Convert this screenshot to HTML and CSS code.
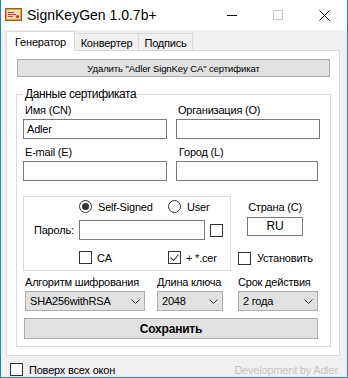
FILE: index.html
```html
<!DOCTYPE html>
<html>
<head>
  <meta charset="utf-8">
  <title>SignKeyGen 1.0.7b+</title>
  <link rel="stylesheet" href="styles.css">
</head>
<body>
  <div class="window">
    <div class="titlebar">
      <svg class="app-icon" width="17" height="13" viewBox="0 0 17 13">
        <rect x="0.5" y="0.5" width="16" height="12" fill="#f3dfb4" stroke="#a85a1c"/>
        <rect x="1.5" y="1.5" width="14" height="10" fill="none" stroke="#dba35a"/>
        <path d="M3 4.5h6M3 6.5h8M3 8.5h5" stroke="#c8452c"/>
        <circle cx="12.5" cy="8.5" r="1.6" fill="#d0302a"/>
      </svg>
      <span class="title">SignKeyGen 1.0.7b+</span>
      <div class="caption">
        <span class="cap-btn">
          <svg width="10" height="10" viewBox="0 0 10 10"><path d="M0 5.5h10" stroke="#000"/></svg>
        </span>
        <span class="cap-btn">
          <svg width="10" height="10" viewBox="0 0 10 10"><rect x="0.5" y="0.5" width="9" height="9" fill="none" stroke="#c6c6c6"/></svg>
        </span>
        <span class="cap-btn">
          <svg width="11" height="11" viewBox="0 0 11 11"><path d="M0.5 0.5l10 10M10.5 0.5l-10 10" stroke="#000"/></svg>
        </span>
      </div>
    </div>

    <div class="client">
      <div class="tabs">
        <div class="tab tab-active">Генератор</div>
        <div class="tab tab-convert">Конвертер</div>
        <div class="tab tab-sign">Подпись</div>
      </div>

      <div class="page">
        <button class="btn btn-remove">Удалить "Adler SignKey CA" сертификат</button>

        <fieldset class="group">
          <legend>Данные сертификата</legend>

          <div class="fields">
            <div class="field">
              <p class="label">Имя (CN)</p>
              <input type="text" class="textbox" value="Adler">
            </div>
            <div class="field">
              <p class="label">Организация (O)</p>
              <input type="text" class="textbox" value="">
            </div>
            <div class="field row2">
              <p class="label">E-mail (E)</p>
              <input type="text" class="textbox" value="">
            </div>
            <div class="field row2">
              <p class="label label-city">Город (L)</p>
              <input type="text" class="textbox textbox-city" value="">
            </div>
          </div>

          <div class="options">
            <div class="signbox">
              <div class="choice-row radios">
                <label class="choice choice-first"><span class="radio radio-on"></span><span class="choice-text">Self-Signed</span></label>
                <label class="choice"><span class="radio"></span><span class="choice-text">User</span></label>
              </div>
              <div class="password-row">
                <span class="password-label">Пароль:</span>
                <input type="password" class="textbox textbox-pass" value="">
                <span class="check check-show"></span>
              </div>
              <div class="choice-row checks">
                <label class="choice choice-first"><span class="check"></span><span class="choice-text narrow">CA</span></label>
                <label class="choice">
                  <span class="check">
                    <svg width="11" height="11" viewBox="0 0 11 11"><path d="M1.5 5.5l3 3 5-6" fill="none" stroke="#333" stroke-width="1.1"/></svg>
                  </span>
                  <span class="choice-text narrow">+ *.cer</span>
                </label>
              </div>
            </div>

            <div class="side">
              <div class="country">
                <p class="country-label">Страна (C)</p>
                <div class="country-box">RU</div>
              </div>
              <label class="choice install"><span class="check"></span><span class="choice-text">Установить</span></label>
            </div>
          </div>

          <div class="selects">
            <div class="select-col col-alg">
              <p class="select-label">Алгоритм шифрования</p>
              <div class="combo">
                <span>SHA256withRSA</span>
                <svg class="chevron" width="9" height="5" viewBox="0 0 9 5"><path d="M0.5 0.5l4 4 4-4" fill="none" stroke="#333"/></svg>
              </div>
            </div>
            <div class="select-col col-len">
              <p class="select-label">Длина ключа</p>
              <div class="combo">
                <span>2048</span>
                <svg class="chevron" width="9" height="5" viewBox="0 0 9 5"><path d="M0.5 0.5l4 4 4-4" fill="none" stroke="#333"/></svg>
              </div>
            </div>
            <div class="select-col col-term">
              <p class="select-label">Срок действия</p>
              <div class="combo">
                <span>2 года</span>
                <svg class="chevron" width="9" height="5" viewBox="0 0 9 5"><path d="M0.5 0.5l4 4 4-4" fill="none" stroke="#333"/></svg>
              </div>
            </div>
          </div>

          <button class="btn btn-save">Сохранить</button>
        </fieldset>
      </div>

      <div class="footer">
        <span class="check"></span>
        <span class="footer-text">Поверх всех окон</span>
        <span class="credits">Development by Adler</span>
      </div>
    </div>
  </div>
</body>
</html>
```

FILE: styles.css
```css
* {
  box-sizing: border-box;
}
body {
  margin: 0;
  font-family: 'Liberation Sans', Arial, sans-serif;
  font-size: 11px;
  letter-spacing: -0.2px;
  color: #000;
}
p {
  margin: 0;
}
.window {
  width: 348px;
  height: 378px;
  border: 1px solid #1883d7;
  border-top: none;
  background-color: #f0f0f0;
  display: flex;
  flex-direction: column;
}
.titlebar {
  height: 30px;
  flex: none;
  background-color: #fff;
  display: flex;
  align-items: center;
}
.app-icon {
  margin-left: 4px;
  margin-top: -1px;
}
.title {
  margin-left: 5px;
  font-size: 14px;
  letter-spacing: 0;
}
.caption {
  margin-left: auto;
  height: 100%;
  display: flex;
}
.cap-btn {
  width: 46px;
  display: flex;
  align-items: center;
  justify-content: center;
}

/* tabs */
.tabs {
  display: flex;
  align-items: flex-end;
  height: 19px;
  margin: 1px 0 0 5px;
}
.tab {
  height: 17px;
  padding-top: 2px;
  margin-left: -1px;
  border: 1px solid #d9d9d9;
  border-bottom: none;
  background-color: #f0f0f0;
  display: flex;
  align-items: center;
  justify-content: center;
}
.tab-active {
  position: relative;
  z-index: 1;
  height: 20px;
  padding-top: 0;
  margin-left: 0;
  margin-bottom: -1px;
  width: 69px;
  background-color: #fff;
}
.tab-convert {
  width: 65px;
}
.tab-sign {
  width: 55px;
}
.page {
  width: 334px;
  height: 306px;
  margin-left: 5px;
  background-color: #fff;
  border: 1px solid #d9d9d9;
}

/* buttons */
.btn {
  display: block;
  padding: 0;
  background-color: #e1e1e1;
  border: 1px solid #adadad;
  font-family: 'Liberation Sans', Arial, sans-serif;
  color: #000;
}
.btn-remove {
  width: 313px;
  height: 18px;
  margin: 8px 0 0 10px;
  font-size: 9.5px;
  letter-spacing: -0.1px;
}
.btn-save {
  width: 294px;
  height: 21px;
  margin: 7px 0 0 1px;
  font-size: 12px;
  font-weight: 700;
  letter-spacing: -0.2px;
}

/* group */
.group {
  width: 315px;
  margin: 10px 0 0 9px;
  padding: 0 6px 7px;
  border: 1px solid #dcdcdc;
  min-width: 0;
}
.group legend {
  padding: 0 2px;
  line-height: 14px;
  font-size: 12px;
  letter-spacing: -0.4px;
}
.fields {
  display: grid;
  grid-template-columns: 144px 144px;
  column-gap: 9px;
}
.label {
  line-height: 14px;
  margin-top: 2px;
  padding-left: 2px;
}
.label-city {
  padding-left: 3px;
}
.row2 .label {
  margin-top: 6px;
}
.textbox {
  display: block;
  width: 144px;
  height: 20px;
  margin-top: 2px;
  padding: 0 3px;
  border: 1px solid #7a7a7a;
  font-family: 'Liberation Sans', Arial, sans-serif;
  font-size: 11px;
  letter-spacing: -0.2px;
  color: #000;
  outline: none;
}
.textbox-city {
  width: 142px;
}

/* sign options */
.options {
  display: flex;
  margin-top: 15px;
}
.signbox {
  width: 208px;
  height: 75px;
  border: 1px solid #dcdcdc;
}
.choice-row {
  display: flex;
  align-items: center;
  height: 13px;
  padding-left: 55px;
}
.radios {
  margin-top: 3px;
}
.checks {
  margin-top: 11px;
}
.choice {
  display: flex;
  align-items: center;
  line-height: 14px;
}
.choice-first {
  width: 89px;
}
.choice-text {
  margin-left: 6px;
}
.choice-text.narrow {
  margin-left: 5px;
}
.radio {
  width: 13px;
  height: 13px;
  border: 1px solid #333;
  border-radius: 50%;
  background-color: #fff;
  display: flex;
  align-items: center;
  justify-content: center;
}
.radio-on::after {
  content: "";
  width: 7px;
  height: 7px;
  border-radius: 50%;
  background-color: #333;
}
.check {
  flex: none;
  width: 13px;
  height: 13px;
  border: 1px solid #333;
  background-color: #fff;
  display: flex;
  align-items: center;
  justify-content: center;
}
.password-row {
  display: flex;
  align-items: center;
  margin-top: 7px;
  padding-left: 10px;
}
.password-label {
  width: 45px;
}
.textbox-pass {
  width: 126px;
  margin-top: 0;
}
.check-show {
  margin-left: 5px;
}
.side {
  margin-left: 7px;
}
.country {
  width: 56px;
  margin: 4px 0 0 9px;
}
.country-label {
  text-align: center;
  line-height: 14px;
  white-space: nowrap;
}
.country-box {
  height: 19px;
  margin-top: 3px;
  border: 1px solid #7a7a7a;
  background-color: #fff;
  text-align: center;
  line-height: 17px;
  font-size: 12px;
}
.install {
  margin-top: 15px;
}

/* selects */
.selects {
  display: flex;
  margin-top: 4px;
  padding-left: 2px;
}
.select-label {
  line-height: 14px;
  white-space: nowrap;
}
.combo {
  height: 20px;
  margin-top: 2px;
  padding: 0 4px;
  background-color: #e1e1e1;
  border: 1px solid #adadad;
  display: flex;
  align-items: center;
  justify-content: space-between;
}
.col-alg {
  width: 120px;
}
.col-len {
  width: 66px;
  margin-left: 12px;
}
.col-term {
  width: 80px;
  margin-left: 15px;
}

/* footer */
.footer {
  display: flex;
  align-items: center;
  height: 13px;
  margin-top: 7px;
  padding: 0 9px;
}
.footer-text {
  margin-left: 6px;
}
.credits {
  margin-left: auto;
  color: #c4c4c4;
}
```
